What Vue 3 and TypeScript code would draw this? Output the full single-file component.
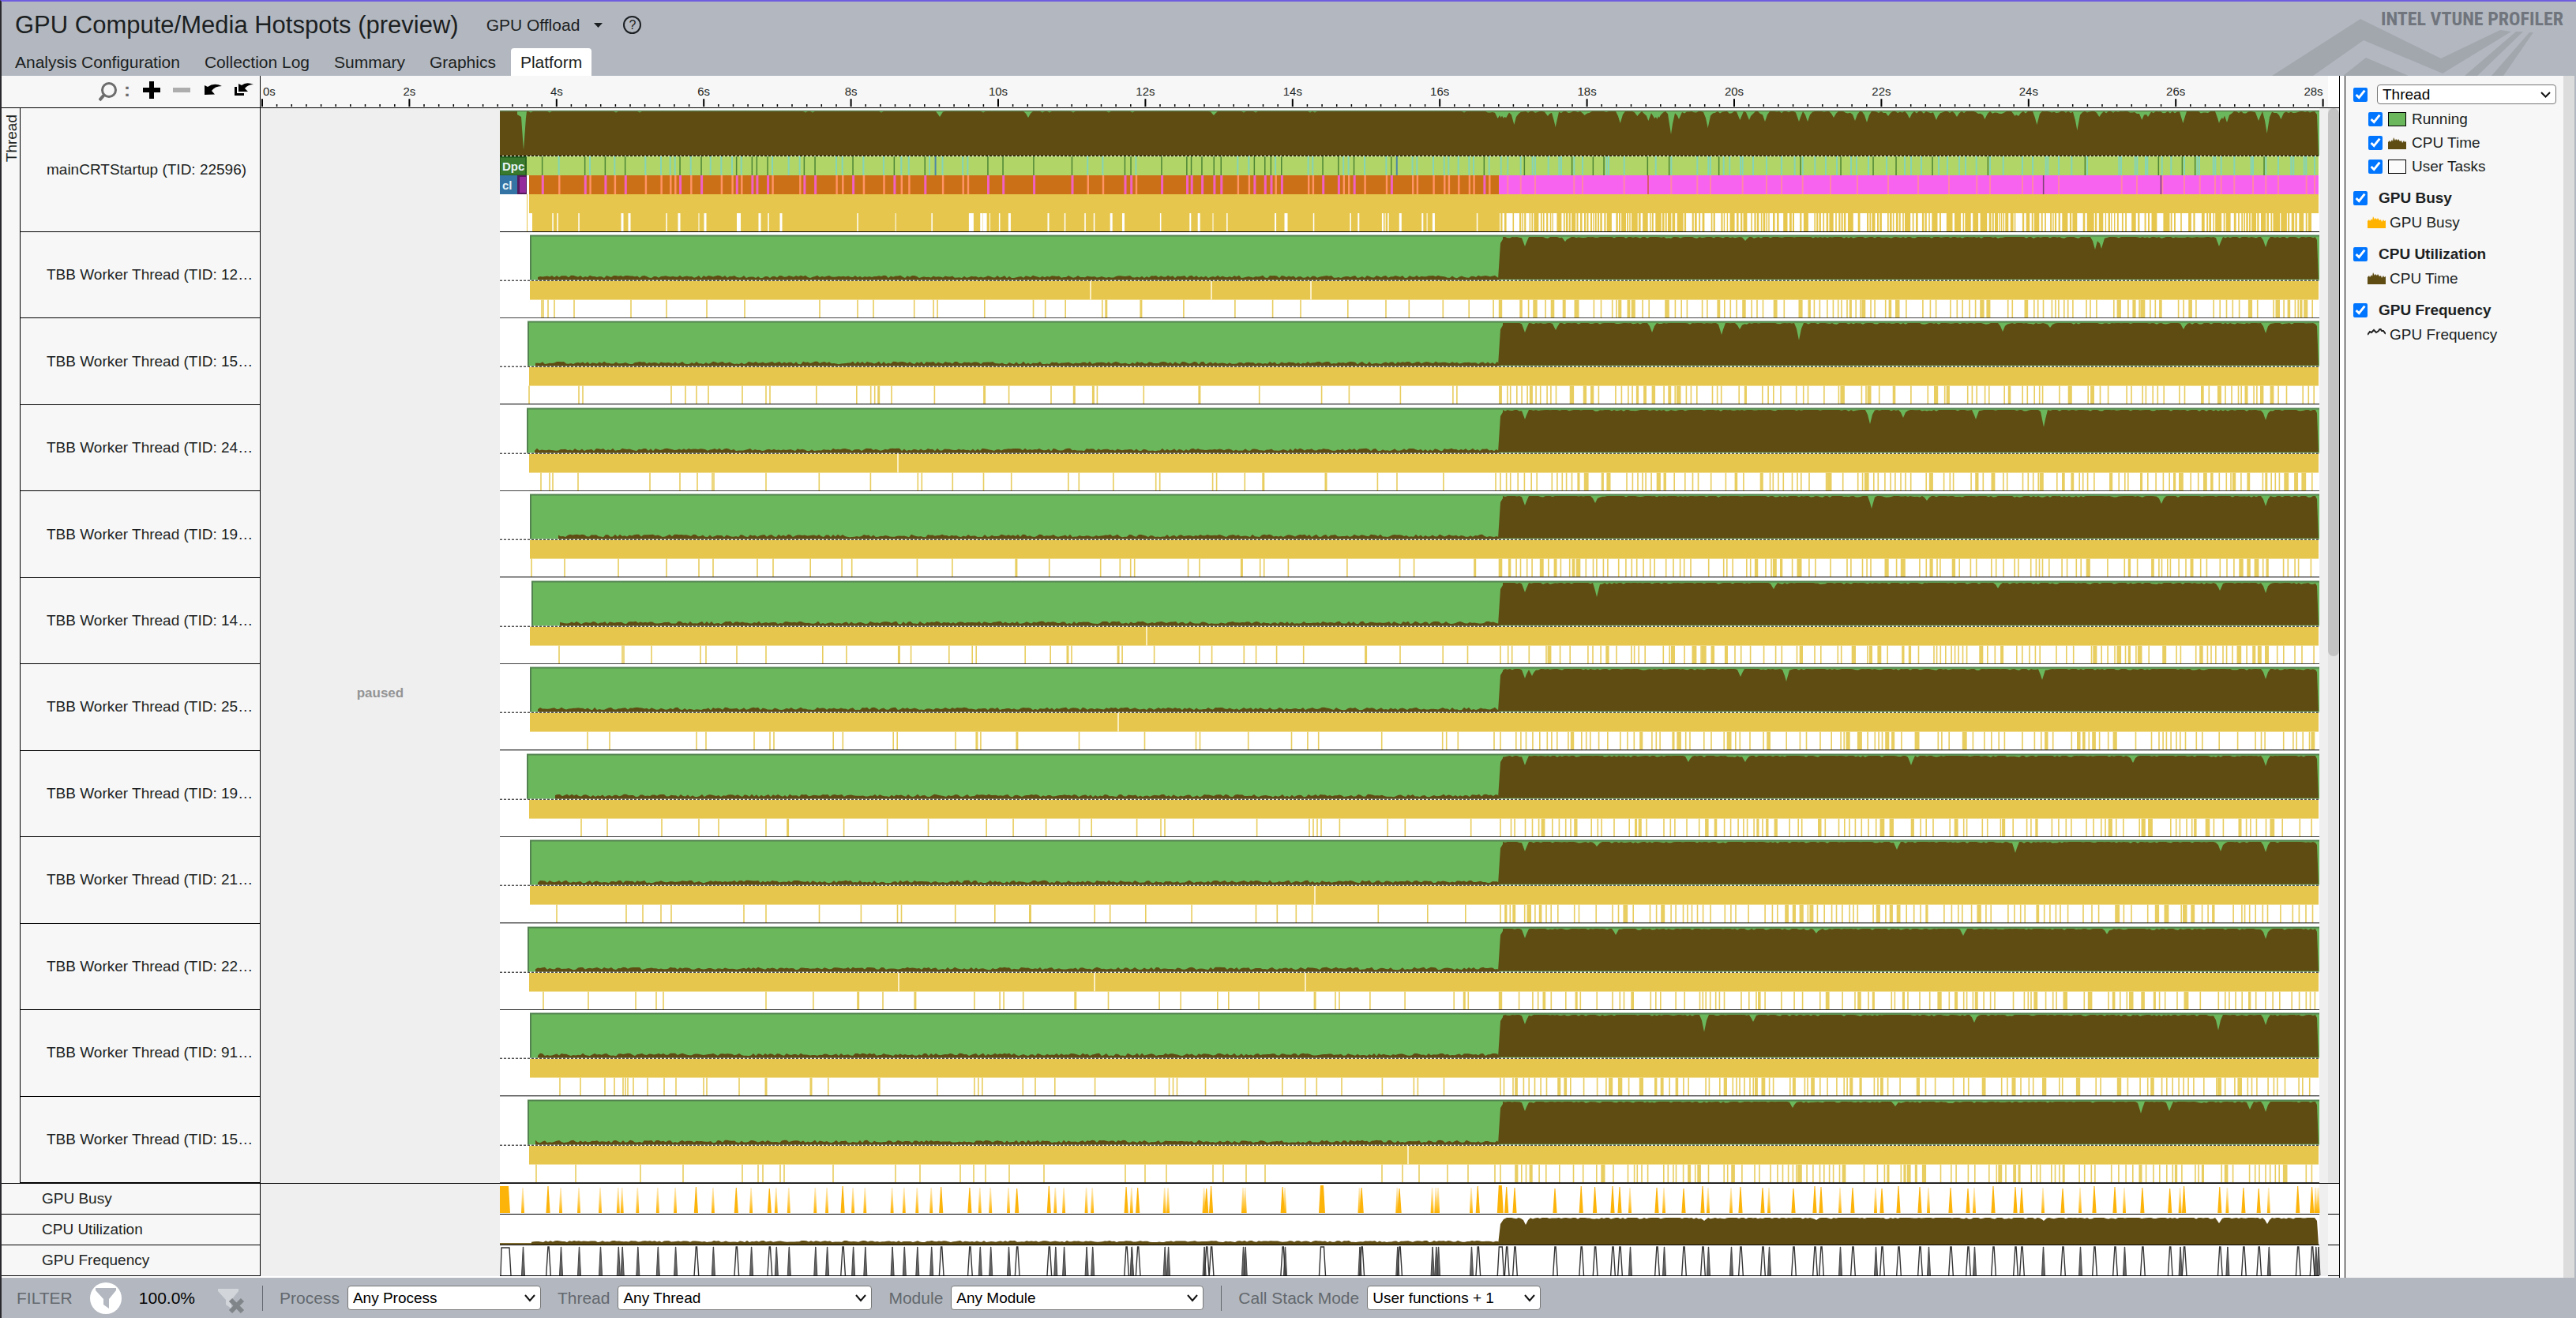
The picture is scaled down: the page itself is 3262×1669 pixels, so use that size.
<script setup lang="ts">
interface Worker {
  label: string
  start: number
  band: number
  marks: number[]
  dips: [number, number][]
  breaks: number[]
}

// Horizontal plot units: the timeline spans X0..X0 + W, recording starts at REC.
const X0 = 330
const W = 2618
const REC = 633
const END = 2937
const STEP = 1898

function rng(seed: number) {
  let s = seed
  return () => {
    s = (s + 0x6d2b79f5) | 0
    let t = Math.imul(s ^ (s >>> 15), 1 | s)
    t = (t + Math.imul(t ^ (t >>> 7), 61 | t)) ^ t
    return ((t ^ (t >>> 14)) >>> 0) / 4294967296
  }
}

const r1 = (n: number) => Math.round(n * 10) / 10

function bars(list: [number, number][], y: number, h: number): string {
  return list.map(([x, w]) => `M${r1(x - w / 2)} ${y}h${w}v${h}h${-w}z`).join('')
}
const at = (list: number[], w: number): [number, number][] => list.map((x) => [x, w])
const scale = (base: number, k: number, list: number[]) => list.map((v) => base + v * k)

const T = 1 / 3
const U = 1000 / 1568

// ---- ruler ----
const majors = Array.from({ length: 15 }, (_, i) => ({ x: 332 + i * 186.4, label: `${i * 2}s` }))
const minorPath = Array.from({ length: 141 }, (_, i) => i)
  .filter((i) => i % 10 !== 0)
  .map((i) => `M${r1(332 + i * 18.64)} 37v3`)
  .join('')
const majorPath = majors.map((m) => `M${r1(m.x)} 30v10`).join('')

// ---- main thread ----
const apiDark = [
  ...scale(600, T, [260, 422, 499, 575, 783, 864, 998, 1057, 1075, 1116, 1255, 1296, 1440]),
  ...scale(860, U, [427, 488, 613, 643, 704, 780, 885, 897, 958, 1008, 1017, 1038, 1062, 1076, 1142, 1163, 1175, 1196, 1278, 1309, 1340, 1414]),
  ...scale(1800, T, [238]),
]
const apiDarkLate = [
  ...scale(1800, T, [391, 572, 652, 693, 859, 941, 1130, 1440]),
  2331, 2372, 2401, 2447,
  ...scale(2500, T, [52, 421, 700, 790, 839, 1101]),
]
const apiCyan = [
  ...scale(600, T, [323, 441, 535, 652, 711, 746, 764, 824, 940, 981, 1016, 1134, 1238, 1377, 1400, 1480]),
  ...scale(860, U, [366, 406, 441, 456, 523, 563, 573, 811, 841, 907, 1109, 1131, 1184, 1249, 1258, 1319, 1329, 1361, 1404, 1456, 1465]),
  ...scale(1800, T, [45, 86, 103, 140, 181, 198, 257]),
]
const apiCyanLate = [
  ...scale(600, T, [899, 1196]),
  ...scale(860, U, [497]),
  ...scale(1800, T, [302, 328, 377, 422, 432, 482, 523, 531, 580, 612, 703, 711, 770, 890, 949, 1048, 1090, 1098, 1148, 1171, 1212, 1220, 1260, 1311, 1368, 1418, 1448, 1495]),
  2312, 2326, 2344, 2351, 2366, 2389, 2412, 2420, 2433, 2455, 2466, 2481, 2489,
  ...scale(2500, T, [8, 60, 110, 183, 222, 272, 280, 321, 370, 429, 550, 558, 611, 619, 651, 658, 713, 748, 798, 847, 855, 908, 916, 938, 988, 1052, 1059, 1108, 1155, 1204, 1213, 1253, 1261, 1293]),
]
const apiBlue = scale(860, U, [509, 1425])
const pinkSalmon = [
  ...scale(1800, T, [328, 377, 432, 580, 612, 770, 949, 1048, 1098, 1220, 1311, 1368, 1448]),
  2318, 2352, 2391, 2429, 2468,
  ...scale(2500, T, [10, 60, 183, 222, 321, 560, 618, 715, 798, 857, 915, 938, 988, 1059, 1108, 1155, 1262, 1293]),
]
const apiDarkPath = bars(at([...apiDark, ...apiDarkLate], 1.5), 61, 24)
const apiCyanPath = bars(at([...apiCyan, ...apiCyanLate], 2), 61, 24)
const apiBluePath = bars(at(apiBlue, 2), 61, 24)
const magentaPath = bars(at(apiDark.map((x) => x + 0.6), 3), 85, 24)
const salmonPath = bars(at(apiCyan.map((x) => x + 0.6), 2.4), 85, 24)
const pinkSalmonPath = bars(at(pinkSalmon, 2), 85, 24)
const pinkDarkPath = bars(at([2587.6, 2736.4], 1.5), 85, 24)

function mainGaps(): string {
  const early: [number, number][] = [
    [672, 4], [700, 1.5], [706, 1.5], [733, 1.5], [788, 3], [797, 3], [844, 1.5], [860, 3], [885, 1], [893, 3],
    [935.5, 5], [962, 3], [973, 1.5], [989, 3], [1086, 1.5],
  ]
  const mid: [number, number][] = (
    [
      [430, 1], [502, 1.5], [580, 6], [600, 3], [607, 5], [617, 1], [636, 1.5], [656, 3], [733, 2], [766, 1.5],
      [806, 1.5], [824, 1.5], [858, 3], [882, 3], [956, 1.5], [1015, 2], [1032, 3], [1060, 1], [1088, 1.5],
      [1184, 2], [1205, 4], [1260, 1.5], [1333, 1.5], [1349, 2], [1397, 2], [1402, 1], [1408, 1.5], [1432, 3],
      [1476, 2], [1485, 1], [1498, 3],
    ] as [number, number][]
  ).map(([x, w]) => [860 + x * U, w])
  const rand = rng(77)
  const late: [number, number][] = [[1870.5, 1.5]]
  let x = 1899
  while (x < 2928) {
    const roll = rand()
    const w = roll < 0.45 ? 1.2 : roll < 0.85 ? 2.5 : 4 + rand() * 5
    late.push([x + w / 2, r1(w)])
    x += w + (rand() < 0.7 ? 1.3 + rand() * 1.5 : 3 + rand() * 6)
  }
  late.push([2932, 10])
  return bars([...early, ...mid, ...late], 133, 23)
}
const mainGapPath = mainGaps()

// Filled profile with a slightly ragged top edge; dips cut spikes down into it.
function profile(from: number, top: number, bottom: number, seed: number, dips: [number, number][], noise: number, quietUntil = 0): string {
  const rand = rng(seed)
  const pts: [number, number][] = []
  for (let x = from; x < END - 4; x += 3) {
    const v = x < quietUntil ? (rand() < 0.04 ? 1.5 : 0) : rand() < 0.45 ? rand() * noise : 0
    pts.push([x, top + v])
  }
  for (const [dx, depth] of dips) {
    for (const p of pts) {
      const d = Math.abs(p[0] - dx)
      if (d < 4.5) p[1] = Math.max(p[1], top + depth * (1 - d / 4.5))
    }
    if (dx > from) pts.push([dx, top + depth])
  }
  pts.sort((a, b) => a[0] - b[0])
  return `M${from} ${bottom}` + pts.map(([x, y]) => `L${r1(x)} ${r1(y)}`).join('') + `L${END - 3} ${top + 4}L${END - 1} ${bottom}Z`
}

const mainDips: [number, number][] = [
  ...([[290, 9], [302, 8], [312, 9], [322, 8], [352, 17], [480, 6], [509, 20], [620, 5], [755, 15], [820, 6], [862, 12], [885, 9], [895, 10], [903, 8], [948, 29], [978, 10], [1088, 21], [1210, 11], [1245, 11], [1305, 13], [1434, 13], [1467, 13]] as [number, number][]).map(([x, d]): [number, number] => [1800 + x / 3, d]),
  [2322, 8], [2349, 12], [2364, 14], [2391, 6], [2418, 9], [2452, 11], [2478, 7],
  ...([[40, 10], [155, 6], [168, 6], [238, 17], [391, 24], [475, 7], [637, 11], [660, 7], [793, 15], [930, 15], [945, 10], [960, 14], [1080, 12], [1112, 28], [1165, 10]] as [number, number][]).map(([x, d]): [number, number] => [2500 + x / 3, d]),
  [1190, 7], [1302, 8], [1537, 5],
]
const mainProfile = profile(REC, 4, 60, 5, mainDips, 3, 1890)

// ---- worker threads ----
const defs: [string, number, number, number[], [number, number][], number[]][] = [
  ['12…', 671, 671, [686, 688, 694, 702, 727, 799, 844, 895, 943, 1038, 1086], [[1982, 6], [2210, 5], [2653, 16], [2661, 15], [2810, 12]], [1381, 1534, 1660]],
  ['15…', 668, 670, [670, 733, 738, 850, 868, 882, 897, 940], [[1970, 9], [2092, 12], [2180, 15], [2203, 8], [2278, 22], [2536, 11], [2596, 6], [2765, 8]], []],
  ['24…', 667, 670, [685, 696, 700, 732, 823, 861, 883, 902, 904], [[2368, 18], [2410, 10], [2502, 12], [2588, 22]], [1137]],
  ['19…', 671, 671, [673, 715, 783, 844, 885, 903, 959], [[2020, 9], [2370, 16], [2440, 6], [2737, 10]], []],
  ['14…', 673, 671, [708, 788, 790, 825, 887, 894, 933], [[2022, 18], [2246, 8], [2530, 7], [2811, 10]], [1452]],
  ['25…', 671, 671, [744, 772, 882, 894, 955], [[1940, 9], [2204, 10], [2262, 16], [2586, 14]], [1416]],
  ['19…', 667, 670, [736, 769, 838, 885, 910], [[2138, 8], [2210, 8], [2420, 12], [2701, 9]], []],
  ['21…', 671, 671, [705, 793, 814, 837, 850, 942], [[2022, 6], [2402, 10], [2552, 14], [2812, 12]], [1665]],
  ['22…', 668, 670, [688, 745, 805, 831, 840], [[2046, 8], [2300, 6], [2486, 9], [2668, 7]], [1138, 1386, 1653]],
  ['91…', 671, 671, [709, 735, 766, 778, 789, 792, 795, 802, 820, 841, 856, 891, 895, 936], [[2158, 22], [2220, 9], [2500, 10], [2809, 20]], []],
  ['15…', 668, 670, [679, 729, 811, 865, 940, 960, 966, 988, 993, 1055, 1134, 1165, 1216, 1233, 1248, 1278, 1322, 1425, 1450, 1477, 1536, 1549, 1578, 1602, 1750, 1776, 1797, 1833, 1859, 1893], [[2270, 8], [2400, 6], [2711, 15], [2747, 12], [2849, 10]], [1783]],
]
const workers: Worker[] = defs.map(([tid, start, band, marks, dips, breaks]) => ({
  label: `TBB Worker Thread (TID: ${tid}`,
  start,
  band,
  marks,
  dips: [[1931, 12], ...dips, [2869, 13]],
  breaks,
}))

const noisePath = (from: number, base: number, seed: number, min: number, amp: number) => {
  const rand = rng(seed)
  let d = `M${from} ${base}`
  for (let x = from; x < STEP; x += 3) d += `L${x} ${r1(base - min - rand() * amp)}`
  return d + `L${STEP} ${base - min}V${base}Z`
}

const workerPlots = workers.map((w, i) => {
  const rand = rng(900 + i * 31)
  const list: [number, number][] = w.marks.map((x) => [x, 1.6])
  let x = Math.max(970, w.marks[w.marks.length - 1] + 20)
  while (x < 1895) {
    list.push([x, rand() < 0.12 ? 3 : 1.6])
    x += rand() < 0.15 ? 5 : 12 + rand() * 72
  }
  x = 1900
  while (x < 2932) {
    const wd = rand() < 0.75 ? 1.6 : 3 + rand() * 3
    list.push([x, r1(wd)])
    x += wd + (rand() < 0.72 ? 2 + rand() * 6 : 8 + rand() * 14)
  }
  const step = profile(1903, 6, 60, 40 + i, w.dips, 1.8)
  return {
    ...w,
    markPath: bars(list, 86, 23),
    noise: noisePath(w.start + ([3, 4, 6].includes(i) ? 36 : 10), 61, 200 + i, 2.5, 3.5),
    step: step.replace('M1903 60', 'M1897 60L1900 14L1903 9'),
    breakPath: bars(at(w.breaks, 1.6), 62, 24),
  }
})

// ---- GPU rows: [position, strength] ----
type Peak = [number, number]
const small = (base: number, k: number, l: number[], s: number): Peak[] => scale(base, k, l).map((x) => [x, s])
const K6 = 1 / 2.24
const K7 = 1 / 2.529
const K8 = 1 / 2.79
const peaks: Peak[] = [
  [662, 0], [694, 1], [710, 0], [733, 0],
  ...small(760, K6, [0, 51, 62, 106, 163, 213, 320, 428, 499, 535, 610, 643, 717, 751, 828, 862, 899, 939, 1077, 1107, 1158, 1291, 1315, 1379, 1396, 1507], 0),
  ...small(760, K6, [272, 386, 480, 688, 967, 1048, 1182, 1273], 1),
  ...small(1400, K7, [83, 189, 200, 315, 440, 447, 574, 813, 934, 1046, 1058, 1065, 1171], 0),
  ...small(1400, K7, [66, 103, 323, 338, 567, 820, 941, 1192, 1284, 1310, 1439, 1523, 1567], 1),
  ...small(1400, K7, [693, 1264], 2),
  ...([[2042, 1], [2051, 1], [2064, 0], [2098, 1], [2107, 0], [2132, 1], [2156, 1], [2163, 0], [2192, 0], [2204, 1], [2232, 1], [2240, 0], [2271, 1], [2298, 1], [2306, 1], [2330, 0], [2346, 1], [2375, 0], [2383, 1], [2404, 1], [2431, 1], [2442, 0], [2470, 1], [2492, 1], [2500, 0], [2524, 1], [2552, 1], [2560, 1], [2587, 0], [2612, 1], [2634, 0], [2652, 1], [2678, 1], [2690, 0]] as Peak[]),
  ...small(2700, K8, [169, 336, 482, 648, 657], 0),
  ...small(2700, K8, [36, 133, 183, 309, 393, 447, 585, 635], 1),
]
const spike = (x: number, half: number, flat: number, top: number, base: number) =>
  `M${r1(x - half)} ${base}L${r1(x - flat)} ${top}H${r1(x + flat)}L${r1(x + half)} ${base}`
const busyFaint = peaks.filter((p) => p[1] === 0).map((p) => spike(p[0], 2, 0.8, 5, 37)).join('')
const busySolid =
  `M${REC} 37V3H644L646 37` +
  peaks.filter((p) => p[1] > 0).map((p, i) => spike(p[0], p[1] === 2 ? 4 : 2.6, p[1] === 2 ? 2 : 0.5, p[1] === 2 ? 2 : 3 + (i % 4), 37)).join('')
const freqFaint = peaks.filter((p) => p[1] === 0).map((p) => spike(p[0] + 0.5, 2, 0.2, 2, 38)).join('')
const freqOpen =
  'M634 38L635 3H645L647 38' +
  peaks.filter((p) => p[1] > 0).map((p) => spike(p[0] + 0.5, p[1] === 2 ? 4 : 2.8, p[1] === 2 ? 2 : 0.6, 2, 38)).join('')
const utilStep = profile(1908, 4, 38, 601, [[1932, 9], [2810, 7], [2871, 8], [2158, 4], [2300, 3], [2588, 4]], 1.6).replace('M1908 38', 'M1897 38L1900 12L1904 6')
const utilLow = noisePath(673, 38, 700, 3, 2)

const filters = [
  { id: 'process', label: 'Process', value: 'Any Process', cls: 'w-process', bar: true },
  { id: 'thread', label: 'Thread', value: 'Any Thread', cls: 'w-thread', bar: false },
  { id: 'module', label: 'Module', value: 'Any Module', cls: 'w-module', bar: false },
  { id: 'stack', label: 'Call Stack Mode', value: 'User functions + 1', cls: 'w-stack', bar: true },
]
const tabs = ['Analysis Configuration', 'Collection Log', 'Summary', 'Graphics', 'Platform']
const legend = [
  { title: 'GPU Busy', item: 'GPU Busy', kind: 'busy' },
  { title: 'CPU Utilization', item: 'CPU Time', kind: 'cpu' },
  { title: 'GPU Frequency', item: 'GPU Frequency', kind: 'freq' },
]
const hill = 'M0 15V6L2 4L3 6L5 3L6 5L7 0L9 4L10 2L12 4L13 2L15 5L17 4L18 7L20 4L21 6L23 5V15Z'
const box = (h: number) => `${X0} 0 ${W} ${h}`
</script>

<template>
  <div class="app">
    <header class="header">
      <svg class="emblem" width="400" height="94" viewBox="0 0 400 94" aria-hidden="true">
        <g fill="#a2a7ae" transform="translate(-60 0)">
          <path d="M75 94L187 22L289 72L364 36L378 38L291 91L191 49L127 94Z" />
          <path d="M165 94L194 71L248 94Z" />
          <path d="M319 94L384 38L393 38L335 94Z" />
          <path d="M353 94L401 39L406 39L368 94Z" />
        </g>
      </svg>
      <div class="brand">INTEL VTUNE PROFILER</div>
      <div class="title-row">
        <h1>GPU Compute/Media Hotspots (preview)</h1>
        <button class="viewpoint" type="button">
          GPU Offload
          <svg width="11" height="6" viewBox="0 0 11 6"><path d="M0 0H11L5.5 6Z" fill="#1c1f22" /></svg>
        </button>
        <button class="help" type="button" aria-label="Help">?</button>
      </div>
      <nav class="tabs">
        <a v-for="t in tabs" :key="t" href="#" :class="{ active: t === 'Platform' }">{{ t }}</a>
      </nav>
    </header>

    <main class="body">
      <section class="timeline">
        <div class="ruler-row">
          <div class="tools">
            <svg width="24" height="26" viewBox="0 0 24 26" fill="none" stroke="#6c6c6c" stroke-width="3">
              <circle cx="13" cy="11" r="8.5" /><path d="M7 17L1 24" stroke-width="4" />
            </svg>
            <span class="colon">:</span>
            <button type="button" aria-label="Zoom in">
              <svg width="22" height="22" viewBox="0 0 22 22"><path d="M8 0h6v8h8v6h-8v8h-6v-8h-8v-6h8z" /></svg>
            </button>
            <button type="button" aria-label="Zoom out">
              <svg width="22" height="22" viewBox="0 0 22 22"><path d="M0 8h22v6h-22z" fill="#adadad" /></svg>
            </button>
            <button type="button" aria-label="Undo zoom">
              <svg width="24" height="22" viewBox="0 0 24 22"><path d="M2 5L6 7Q14 1 24 6Q15 6 11 12L15 16.5L2 17Z" /></svg>
            </button>
            <button type="button" aria-label="Reset zoom">
              <svg width="24" height="22" viewBox="0 0 24 22">
                <path d="M5 3L9 5Q15 0 24 4Q17 4 13 9L17 13L5 13Z" />
                <path d="M0 7H3V15H12V18H0Z" />
              </svg>
            </button>
          </div>
          <svg class="plot" :viewBox="box(41)" preserveAspectRatio="none">
            <path :d="minorPath" stroke="#000" stroke-width="1.5" />
            <path :d="majorPath" stroke="#000" stroke-width="2" />
            <text
              v-for="(m, i) in majors"
              :key="m.label"
              :x="i === 0 ? m.x + 1 : m.x"
              y="26"
              :text-anchor="i === 14 ? 'end' : i === 0 ? 'start' : 'middle'"
              class="tick"
            >{{ m.label }}</text>
          </svg>
          <div class="corner"></div>
        </div>

        <div class="threads">
          <div class="group"><span>Thread</span></div>
          <div class="rows">
            <div class="row main-row">
              <div class="label">mainCRTStartup (TID: 22596)</div>
              <svg class="plot" :viewBox="box(157)" preserveAspectRatio="none">
                <rect :x="REC" y="0" :width="END - REC" height="157" fill="#fff" />
                <rect :x="REC" y="3" :width="END - REC" height="57" fill="#6bb85c" />
                <path :d="mainProfile" fill="#5f4c13" />
                <path d="M655 4H667L666 12L663 53L660 11L655 8Z" fill="#6bb85c" />
                <path :d="`M${REC} 3.5H${END}`" stroke="#5a7c4c" stroke-width="1.5" />
                <rect x="667" y="61" width="2269" height="24" fill="#b2d568" />
                <path :d="apiCyanPath" fill="#85d4b4" />
                <path :d="apiDarkPath" fill="#4d8535" />
                <path :d="apiBluePath" fill="#4c87a6" />
                <rect x="633" y="61" width="34" height="24" fill="#28621f" />
                <rect x="634" y="63" width="31" height="21" fill="#3a7a2e" />
                <rect x="670" y="85" width="1228" height="24" fill="#cc7018" />
                <rect x="1898" y="85" width="1038" height="24" fill="#f763ef" />
                <path :d="salmonPath" fill="#ff9466" />
                <path :d="magentaPath" fill="#f062c4" />
                <path :d="pinkSalmonPath" fill="#ff85a8" />
                <path :d="pinkDarkPath" fill="#7b4270" />
                <rect x="2086" y="85" width="2" height="24" fill="#d85a70" />
                <rect x="633" y="85" width="22" height="24" fill="#3474a4" />
                <rect x="655" y="85" width="12" height="24" fill="#551a5e" />
                <rect x="658" y="87" width="8" height="20" fill="#932b9c" />
                <rect x="667" y="109" width="1" height="47" fill="#e6c64c" />
                <rect x="670" y="109" width="2266" height="47" fill="#e6c64c" />
                <path :d="mainGapPath" fill="#fff" />
                <path class="rule" :d="`M${REC} 60.5H${END}`" stroke="#fff" />
                <path class="rule" :d="`M${REC} 60.5H${END}`" stroke="#000" stroke-dasharray="3 2" />
                <path class="rule" :d="`M${REC} 156.5H${END}`" stroke="#000" />
                <text x="636" y="79" class="task">Dpc</text>
                <text x="636" y="103" class="task">cl</text>
              </svg>
            </div>
            <div v-for="(w, i) in workerPlots" :key="i" class="row worker-row">
              <div class="label">{{ w.label }}</div>
              <svg class="plot" :viewBox="box(110)" preserveAspectRatio="none">
                <rect :x="REC" y="0" :width="END - REC" height="110" fill="#fff" />
                <rect :x="w.start" y="4" :width="END - w.start" height="57" fill="#6bb85c" />
                <path :d="w.noise" fill="#5f4c13" />
                <path :d="w.step" fill="#5f4c13" />
                <path :d="`M${w.start + 1} 61V4.5H${END}`" fill="none" stroke="#52824f" stroke-width="2" />
                <rect :x="w.band" y="62" :width="2936 - w.band" height="24" fill="#e6c64c" />
                <path :d="w.breakPath" fill="#fff8df" />
                <path :d="w.markPath" fill="#e8cd60" />
                <path class="rule" :d="`M${w.start} 61.5H${END}`" stroke="#fff" />
                <path class="rule" :d="`M${REC} 61.5H${END}`" stroke="#000" stroke-dasharray="3 2" />
                <path class="rule" :d="`M${REC} 109.3H${END}`" stroke="#000" />
              </svg>
            </div>
          </div>
          <div class="scrollbar"><div class="thumb"></div></div>
        </div>

        <div class="gpu-row">
          <div class="label">GPU Busy</div>
          <svg class="plot" :viewBox="box(39)" preserveAspectRatio="none">
            <defs>
              <linearGradient id="fade" gradientUnits="userSpaceOnUse" x1="0" y1="4" x2="0" y2="37">
                <stop offset="0" stop-color="#ffb300" stop-opacity="0.2" />
                <stop offset="1" stop-color="#ffb300" />
              </linearGradient>
            </defs>
            <rect :x="REC" y="0" :width="END - REC" height="39" fill="#fff" />
            <path :d="busyFaint" fill="url(#fade)" />
            <path :d="busySolid" fill="#fcb30a" />
            <path class="rule" :d="`M${REC} 38.5H${END}`" stroke="#000" />
          </svg>
          <div class="tail"></div>
        </div>
        <div class="gpu-row">
          <div class="label">CPU Utilization</div>
          <svg class="plot" :viewBox="box(39)" preserveAspectRatio="none">
            <rect :x="REC" y="0" :width="END - REC" height="39" fill="#fff" />
            <rect :x="REC" y="36" width="1265" height="2" fill="#7d6a30" />
            <path :d="utilLow" fill="#5f4c13" />
            <path :d="utilStep" fill="#5f4c13" />
            <path class="rule" :d="`M${REC} 38.5H${END}`" stroke="#000" />
          </svg>
          <div class="tail"></div>
        </div>
        <div class="gpu-row">
          <div class="label">GPU Frequency</div>
          <svg class="plot" :viewBox="box(39)" preserveAspectRatio="none">
            <rect :x="REC" y="0" :width="END - REC" height="39" fill="#fff" />
            <path :d="freqFaint" fill="#666" stroke="#444" stroke-width="1" />
            <path :d="freqOpen" fill="none" stroke="#333" stroke-width="1.4" />
            <path class="rule" :d="`M${REC} 38.5H${END}`" stroke="#000" />
          </svg>
          <div class="tail"></div>
        </div>
        <div class="paused"><span>paused</span></div>
      </section>

      <aside class="legend">
        <div class="legend-content">
          <div class="head">
            <input type="checkbox" checked aria-label="Show threads" />
            <span class="select-wrap grow">
              <select aria-label="Grouping"><option>Thread</option></select>
              <svg class="chevron" width="13" height="8" viewBox="0 0 13 8"><path d="M1 1L6.5 6.5L12 1" fill="none" stroke="#111" stroke-width="2" /></svg>
            </span>
          </div>
          <label class="item">
            <input type="checkbox" checked />
            <svg width="23" height="18" viewBox="0 0 23 18"><rect x=".5" y=".5" width="22" height="17" fill="#6bb85c" stroke="#000" /></svg>
            Running
          </label>
          <label class="item">
            <input type="checkbox" checked />
            <svg width="23" height="18" viewBox="0 -2 23 18"><path :d="hill" fill="#5f4c13" /></svg>
            CPU Time
          </label>
          <label class="item">
            <input type="checkbox" checked />
            <svg width="23" height="18" viewBox="0 0 23 18"><rect x=".5" y=".5" width="22" height="17" fill="#fbfbfb" stroke="#000" /></svg>
            User Tasks
          </label>
          <div v-for="g in legend" :key="g.title" class="block">
            <label class="block-head"><input type="checkbox" checked /> {{ g.title }}</label>
            <div class="sub">
              <svg width="23" height="16" viewBox="0 0 23 16">
                <path v-if="g.kind !== 'freq'" :d="hill" :fill="g.kind === 'busy' ? '#ffb300' : '#5f4c13'" />
                <path v-else d="M0 8L3 4L5 5L8 2L11 5L14 3L16 0L18 3L20 3L23 7" fill="none" stroke="#222" stroke-width="2" />
              </svg>
              {{ g.item }}
            </div>
          </div>
        </div>
        <div class="legend-scroll"></div>
      </aside>
    </main>

    <footer class="filter">
      <span class="caption">FILTER</span>
      <button class="round" type="button" aria-label="Apply filter">
        <svg width="26" height="26" viewBox="0 0 26 26"><path d="M0 0H26V3L17 14V26L10 21V14L0 3Z" fill="#b3b8c0" /></svg>
      </button>
      <span class="percent">100.0%</span>
      <button class="clear" type="button" aria-label="Clear filter">
        <svg width="34" height="32" viewBox="0 0 34 32">
          <path d="M0 0H26V3L17 14V25L10 20V14L0 3Z" fill="#d2d5da" />
          <path d="M16 14L31 29M31 14L16 29" stroke="#80858a" stroke-width="6" />
        </svg>
      </button>
      <template v-for="f in filters" :key="f.id">
        <span v-if="f.bar" class="bar"></span>
        <label :for="f.id">{{ f.label }}</label>
        <span class="select-wrap" :class="f.cls">
          <select :id="f.id"><option>{{ f.value }}</option></select>
          <svg class="chevron" width="14" height="10" viewBox="0 0 14 10"><path d="M1 1L7 8L13 1" fill="none" stroke="#111" stroke-width="2" /></svg>
        </span>
      </template>
    </footer>
  </div>
</template>

<style>
body {
  margin: 0;
}
</style>

<style scoped>
* {
  box-sizing: border-box;
}
.app {
  display: flex;
  flex-direction: column;
  height: 100vh;
  min-height: 900px;
  border-top: 2px solid #6f5de0;
  border-left: 2px solid #2a2a2e;
  background: #b3b8c0;
  color: #1c1f22;
  font-family: 'Liberation Sans', Arial, sans-serif;
  font-size: 19px;
}
button {
  padding: 0;
  border: 0;
  background: none;
  color: inherit;
  font: inherit;
}
svg {
  display: block;
}
.header {
  position: relative;
  display: flex;
  flex-direction: column;
  justify-content: space-between;
  flex: none;
  height: 94px;
}
.emblem {
  position: absolute;
  right: 0;
  top: 0;
}
.brand {
  position: absolute;
  right: 16px;
  top: 8px;
  color: #70757d;
  font-family: 'Liberation Sans Narrow', 'Roboto Condensed', 'Open Sans Condensed', 'Liberation Sans', sans-serif;
  font-size: 24px;
  font-weight: 700;
  line-height: 28px;
}
.title-row {
  display: flex;
  align-items: center;
  height: 60px;
  padding-left: 17px;
}
h1 {
  margin: 0;
  font-size: 31px;
  font-weight: 400;
}
.viewpoint {
  display: flex;
  align-items: center;
  gap: 18px;
  margin-left: 35px;
  font-size: 21px;
}
.help {
  width: 23px;
  height: 23px;
  margin-left: 26px;
  border: 2px solid #1c1f22;
  border-radius: 50%;
  font-size: 16px;
  line-height: 18px;
}
.tabs {
  display: flex;
  gap: 7px;
  padding-left: 5px;
}
.tabs a {
  height: 35px;
  padding: 0 12px;
  border-radius: 4px 4px 0 0;
  color: inherit;
  font-size: 21px;
  line-height: 36px;
  text-decoration: none;
}
.tabs .active {
  background: #fff;
}
.body {
  display: flex;
  flex: 1;
  min-height: 0;
  background: #fff;
}
.timeline {
  position: relative;
  display: flex;
  flex: 1;
  flex-direction: column;
  min-width: 0;
  margin-right: 6px;
  padding-bottom: 2px;
  border-right: 1px solid #000;
}
.plot {
  flex: 1;
  width: 0;
  height: 100%;
  background: #efefef;
}
.rule {
  shape-rendering: crispEdges;
}
.ruler-row {
  display: flex;
  flex: none;
  height: 41px;
  border-bottom: 1px solid #000;
  background: #f7f7f7;
}
.ruler-row .plot {
  background: #f7f7f7;
}
.tools {
  display: flex;
  align-items: center;
  justify-content: flex-end;
  gap: 16px;
  width: 328px;
  padding-right: 8px;
  padding-bottom: 4px;
  border-right: 1px solid #000;
}
.tools > svg {
  margin-top: 4px;
}
.colon {
  width: 8px;
  margin-left: -8px;
  color: #6c6c6c;
  font-size: 24px;
  font-weight: 700;
}
.corner {
  width: 14px;
  background: #fff;
}
.tick {
  fill: #1c1f22;
  font-size: 15px;
}
.task {
  fill: #e8f3f8;
  font-size: 15px;
  font-weight: 700;
}
.threads {
  display: flex;
  flex: 1;
  min-height: 0;
  border-bottom: 1px solid #000;
}
.group {
  width: 24px;
  padding-top: 8px;
  padding-left: 2px;
  border-right: 1px solid #000;
  background: #f7f7f7;
}
.group span {
  display: block;
  line-height: 21px;
  writing-mode: vertical-rl;
  transform: rotate(180deg);
}
.rows {
  display: flex;
  flex: 1;
  flex-direction: column;
  min-width: 0;
}
.row {
  display: flex;
  min-height: 0;
}
.main-row {
  flex: none;
  height: 157px;
}
.worker-row {
  flex: 1;
}
.label {
  display: flex;
  flex: none;
  align-items: center;
  width: 304px;
  padding-left: 33px;
  border-right: 1px solid #000;
  border-bottom: 1px solid #000;
  background: #f7f7f7;
  white-space: nowrap;
}
.scrollbar {
  width: 14px;
  background: #e4e4e4;
}
.thumb {
  height: 51%;
  border-radius: 7px;
  background: #c3c3c3;
}
.gpu-row {
  display: flex;
  flex: none;
  height: 39px;
}
.gpu-row .label {
  width: 328px;
  padding-left: 51px;
}
.tail {
  width: 14px;
  border-bottom: 1px solid #000;
  background: #f7f7f7;
}
.paused {
  position: absolute;
  top: 41px;
  bottom: 0;
  left: 328px;
  display: flex;
  align-items: center;
  justify-content: center;
  width: calc((100% - 342px) * 0.1157);
  color: #949494;
  font-size: 17px;
  font-weight: 700;
  pointer-events: none;
}
.legend {
  display: flex;
  width: 293px;
  border-right: 2px solid #b3b8c0;
  border-left: 1px solid #000;
  background: #f7f7f7;
}
.legend-content {
  flex: 1;
  padding: 11px 9px 0 10px;
}
.legend-scroll {
  width: 14px;
  background: #dcdcdc;
}
input[type='checkbox'] {
  flex: none;
  width: 18px;
  height: 18px;
  margin: 0;
  accent-color: #0075ff;
}
.head {
  display: flex;
  align-items: center;
  gap: 12px;
  margin-bottom: 4px;
}
.head select {
  height: 25px;
}
.grow {
  flex: 1;
}
.item {
  display: flex;
  align-items: center;
  gap: 7px;
  height: 30px;
  padding-left: 19px;
}
.block {
  margin-top: 10px;
}
.block-head {
  display: flex;
  align-items: center;
  gap: 14px;
  height: 30px;
  font-weight: 700;
}
.sub {
  display: flex;
  align-items: center;
  gap: 5px;
  height: 31px;
  padding-left: 18px;
}
.select-wrap {
  position: relative;
  display: block;
}
select {
  width: 100%;
  height: 31px;
  padding: 0 6px;
  border: 1px solid #767676;
  border-radius: 4px;
  appearance: none;
  background: #fff;
  color: #000;
  font: inherit;
}
.chevron {
  position: absolute;
  top: 50%;
  right: 7px;
  transform: translateY(-50%);
  pointer-events: none;
}
.filter {
  display: flex;
  flex: none;
  align-items: center;
  height: 51px;
  padding-left: 19px;
  font-size: 21px;
}
.caption,
.filter label {
  color: #63686e;
}
.round {
  display: flex;
  align-items: center;
  justify-content: center;
  width: 40px;
  height: 40px;
  margin: 0 22px;
  border-radius: 50%;
  background: #fff;
}
.percent {
  color: #000;
}
.clear {
  margin: 8px 0 0 29px;
}
.bar {
  width: 1px;
  height: 32px;
  margin: 0 0 0 22px;
  background: #63686e;
}
.filter label {
  margin: 0 10px 0 21px;
}
.filter select {
  font-size: 19px;
}
.w-process {
  width: 245px;
}
.w-thread {
  width: 322px;
}
.w-module {
  width: 320px;
}
.w-stack {
  width: 220px;
}
</style>
